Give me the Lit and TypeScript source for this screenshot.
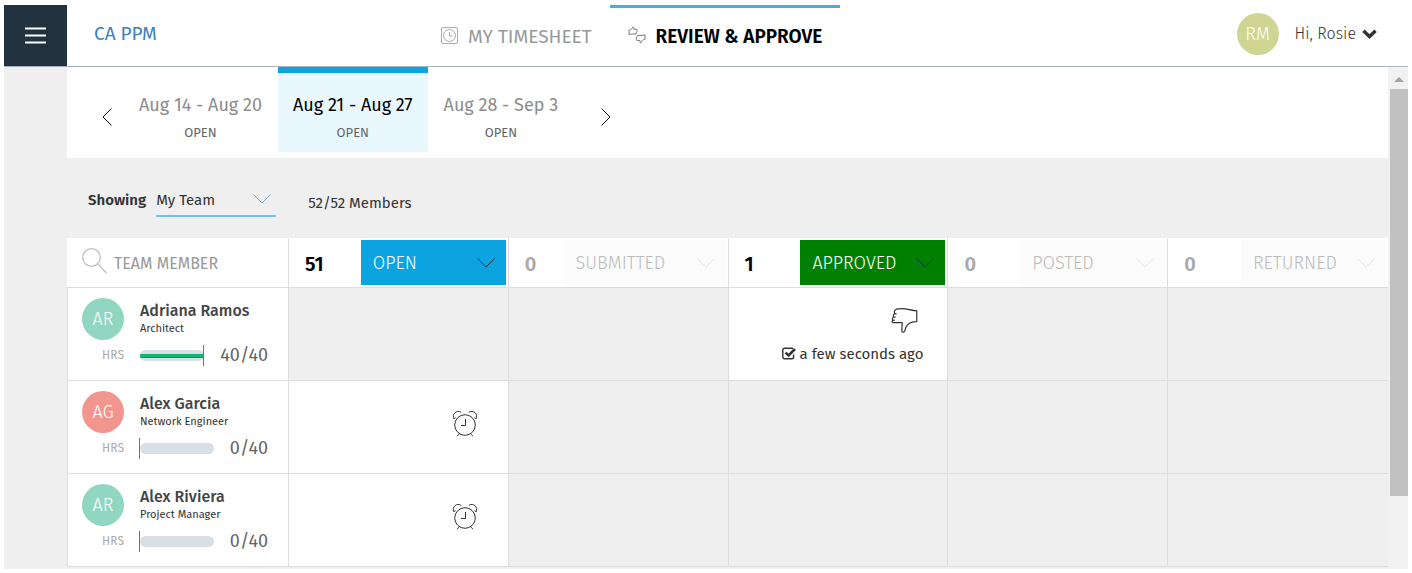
import { LitElement, html, svg, css, nothing } from "lit";
import { customElement, property } from "lit/decorators.js";
import { classMap } from "lit/directives/class-map.js";

interface Status { key: string; label: string; count: number; }
interface Member {
  name: string; initials: string; role: string; tone: string;
  hours: number; total: number; status: string; when?: string;
}

const WEEKS = [
  { label: "Aug 14 - Aug 20", status: "OPEN", active: false },
  { label: "Aug 21 - Aug 27", status: "OPEN", active: true },
  { label: "Aug 28 - Sep 3", status: "OPEN", active: false },
];

const STATUSES: Status[] = [
  { key: "open", label: "OPEN", count: 51 },
  { key: "submitted", label: "SUBMITTED", count: 0 },
  { key: "approved", label: "APPROVED", count: 1 },
  { key: "posted", label: "POSTED", count: 0 },
  { key: "returned", label: "RETURNED", count: 0 },
];

const MEMBERS: Member[] = [
  { name: "Adriana Ramos", initials: "AR", role: "Architect", tone: "mint", hours: 40, total: 40, status: "approved", when: "a few seconds ago" },
  { name: "Alex Garcia", initials: "AG", role: "Network Engineer", tone: "coral", hours: 0, total: 40, status: "open" },
  { name: "Alex Riviera", initials: "AR", role: "Project Manager", tone: "mint", hours: 0, total: 40, status: "open" },
];

const stroke = (w: number, h: number, body: unknown, width = 1) => html`
  <svg width=${w} height=${h} viewBox="0 0 ${w} ${h}" fill="none" stroke="currentColor"
    stroke-width=${width} aria-hidden="true">${body}</svg>`;

const chevronDown = () => stroke(18, 10, svg`<path d="M.5 .5 9 9 17.5 .5"/>`);

@customElement("hours-bar")
export class HoursBar extends LitElement {
  @property({ type: Number }) hours = 0;
  @property({ type: Number }) total = 40;

  static styles = css`
    :host { display: flex; align-items: center; position: relative; height: 21px; }
    .track { flex: 1; height: 11px; border-radius: 6px; background: #d8dfe7; overflow: hidden; display: flex; align-items: center; }
    .fill { height: 4px; background: #10b572; border-bottom: 1px solid #0a9a5f; box-sizing: border-box; }
    .tick { position: absolute; top: 0; bottom: 0; width: 1px; margin-left: -1px; background: #12a66a; }
  `;

  render() {
    const pct = Math.min(100, (this.hours / this.total) * 100);
    return html`
      <div class="track"><div class="fill" style="width:${pct}%"></div></div>
      <div class="tick" style="left:${pct}%"></div>`;
  }
}

@customElement("app-root")
export class AppRoot extends LitElement {
  static styles = css`
    :host {
      display: flex; flex-direction: column; box-sizing: border-box; height: 100vh;
      padding: 5px 4px 4px; background: #fff; color: #333; overflow: hidden;
      font: 400 15px/20px "Fira Sans", "Open Sans", sans-serif;
    }
    *, *::before { box-sizing: border-box; }
    button, input, select { font: inherit; color: inherit; border: 0; background: none; padding: 0; margin: 0; border-radius: 0; }
    svg { display: block; flex: none; }

    .top { flex: none; display: grid; grid-template-columns: 63px 356px auto 1fr; height: 62px; border-bottom: 1px solid #a5b3c3; }
    .menu { background: #21323e; color: #fff; display: grid; place-items: center; }
    .brand { align-self: center; padding: 0 27px; margin-bottom: 4px; font-size: 19px; line-height: 24px; color: #3d7fbf; text-decoration: none; }
    .tabs { display: flex; }
    .tab { display: flex; align-items: center; gap: 10px; padding: 0 18px; border-top: 3px solid transparent; font-size: 19px; line-height: 24px; color: #999; text-decoration: none; white-space: nowrap; }
    .tab.active { border-color: #4aacd9; color: #000; font-weight: 600; }
    .tab svg { color: #aaa; margin-bottom: 4px; }
    .tab.active svg { color: #777; }
    .user { justify-self: end; display: flex; align-items: center; padding-right: 31px; margin-bottom: 3px; }
    .user button { display: flex; align-items: center; gap: 6px; margin-left: 16px; font-size: 16px; font-weight: 300; }
    .avatar { display: grid; place-items: center; width: 42px; height: 42px; border-radius: 50%; color: #fff; font-size: 18px; line-height: 24px; font-weight: 300; }
    .olive { background: #cfd694; }
    .mint { background: #91d6c0; }
    .coral { background: #f2958f; }

    .body { flex: 1; min-height: 0; display: grid; grid-template-columns: 63px minmax(0, 1fr) 20px; background: #efefef; }
    main { grid-column: 2; overflow: hidden; }

    .weeks { display: flex; align-items: flex-start; gap: 1px; height: 91px; padding-left: 24px; background: #fff; }
    .weeks .arrow { width: 32px; display: grid; place-items: center; align-self: center; height: 40px; margin-top: 8px; color: #111; }
    .weeks .arrow.next { margin-left: 16px; }
    .week { height: 85px; padding: 12px 15px 0; border-top: 6px solid transparent; text-align: center; font-size: 18px; line-height: 24px; color: #8c8c8c; white-space: nowrap; }
    .week small { display: block; margin-top: 4px; font-size: 13px; line-height: 24px; color: #666; }
    .week.active { background: #e9f8fe; border-color: #0ba4e0; color: #000; }

    .filters { display: flex; align-items: center; height: 80px; padding: 4px 20px 0 21px; }
    .filters label { font-weight: 600; margin-right: 10px; }
    .picker { display: grid; grid-template-columns: 1fr auto; align-items: center; width: 120px; height: 34px; border-bottom: 2px solid #6ec1f0; }
    .picker select { grid-area: 1 / 1 / 2 / 3; appearance: none; width: 100%; height: 32px; padding-top: 2px; outline: 0; }
    .picker svg { grid-area: 1 / 2; margin: 0 5px 0 0; color: #7fa9d1; pointer-events: none; }
    .count { margin-left: 32px; padding-top: 6px; }

    table { width: 100%; border-collapse: separate; border-spacing: 0; table-layout: fixed; }
    .who { width: 222px; }
    th, td { padding: 0; border: solid #ddd; border-width: 0 1px 1px 0; }
    th { height: 50px; background: #fff; font-weight: 400; text-align: left; }
    th:last-child, td:last-child { border-right: 0; }
    .search { display: flex; align-items: center; gap: 7px; padding: 0 16px 0 15px; color: #bbb; }
    .search svg { margin-bottom: 4px; }
    .search input { width: 100%; height: 26px; padding-top: 2px; font-size: 16px; outline: 0; }
    .search input::placeholder { color: #999; opacity: 1; }
    .status { display: flex; align-items: center; justify-content: space-between; padding: 2px 2px 2px 16px; color: #000; }
    .status b { padding-top: 2px; font-size: 20px; line-height: 24px; font-weight: 600; }
    .status button { display: flex; align-items: center; justify-content: space-between; gap: 20px; min-width: 145px; height: 45px; padding: 0 11px 0 12px; font-size: 18px; font-weight: 300; color: #fff; background: #0ba4e0; }
    .status.submitted button { min-width: 162px; }
    .status.approved button { background: #008000; }
    .status svg { color: #0a2a33; }
    .status.empty { color: #aaa; }
    .status.empty button { background: #fbfbfb; color: #bbb; }
    .status.empty svg { color: #e6e6e6; }

    td { height: 93px; vertical-align: top; }
    .person { display: grid; grid-template-columns: 42px 1fr; align-content: start; column-gap: 16px; row-gap: 5px; padding: 10px 20px 0 14px; border-left: 1px solid #ddd; height: 92px; background: #fff; }
    .name { padding-top: 3px; font-size: 16px; line-height: 20px; font-weight: 500; color: #444; }
    .role { font-size: 11px; line-height: 16px; }
    .unit { font-size: 12px; line-height: 21px; color: #aaa; text-align: right; }
    .hours { display: flex; align-items: center; gap: 16px; font-size: 18px; line-height: 21px; color: #666; }
    .hours hours-bar { flex: 1; }
    .card { display: flex; flex-direction: column; align-items: flex-end; justify-content: center; gap: 11px; height: 92px; padding: 3px 24px 0; background: #fff; color: #333; }
    .card.open { padding: 0 25px 8px; }
    .card svg { margin-right: 5px; }
    .card .stamp { display: flex; align-items: center; gap: 4px; white-space: nowrap; }
    .card .stamp svg { margin: 0; }

    .scroll { display: flex; flex-direction: column; align-items: center; padding-left: 2px; background: #f1f1f1; color: #a3a3a3; }
    .up { width: 0; height: 0; margin: 10px 0 7px; border: solid transparent; border-width: 0 5px 5px; border-bottom-color: #a3a3a3; }
    .thumb { width: 100%; height: 81%; background: #c1c1c1; }
  `;

  private clockTab() {
    return stroke(17, 17, svg`<rect x=".5" y=".5" width="16" height="16" rx="1.5"/><circle cx="8.5" cy="8.5" r="6"/><path d="M8.5 5v4h3"/>`);
  }

  private thumbsTab() {
    return stroke(18, 18, svg`
      <path d="M1 4.2 2.6 3.5C4 3 4.6 2 4.8 .9 5.6 .7 6 1.5 5.8 3.3H8.6L9.2 4.2 8.8 5.2 9 6.2 8.4 6.8 8 8H3.6L1 8.4Z"/>
      <path d="M17 13.2 15.4 13.8C13.8 14.5 13.2 15.6 13 16.8 12 17 11.8 16 12 14.4H8.8L8.2 13.3 8.6 12.3 8.4 11.2 9.2 10.6 9.8 9.4H14.4L17 8.9Z"/>`);
  }

  private alarm() {
    return stroke(26, 27, svg`
      <circle cx="13" cy="15" r="10.3"/><path d="M13.5 9v6.5H9"/>
      <path d="M2 9C-.6 4.4 4.6-.8 9.2 2.4M24 9C26.6 4.4 21.4-.8 16.8 2.4M2 8.6 3.6 7.6M24 8.6 22.4 7.6M7.4 23.8 5 26.2M18.6 23.8 21 26.2"/>`);
  }

  private thumbDown() {
    return stroke(27, 25, svg`
      <path stroke-linejoin="round" d="M5 1.2C9 .6 14 .6 17 1.4 20 2.2 23 2.6 25.8 2.8V13.6C21 13.6 17 15 15 19L13.6 23.4C12.6 24.6 11 24.4 10.8 23L11.2 14.6H2.2C.8 14.4 .6 13 1.8 12.4L3.8 12.2M1.8 12.2C1 11 1.4 9.4 2.8 9.2L4.8 9M2.8 9C2 7.8 2.4 6.2 3.8 5.8L5.6 5.6M3.8 5.6C3 4 3.6 2.2 5 1.2"/>`, 1.2);
  }

  private checked() {
    return html`<svg width="14" height="13" viewBox="0 0 14 13" fill="none" stroke="currentColor" aria-hidden="true">
      <path d="M11 1.2H2.6A1.8 1.8 0 0 0 .8 3V10A1.8 1.8 0 0 0 2.6 11.8H9.8A1.8 1.8 0 0 0 11.6 10V7.6" stroke-width="1.4"/>
      <path d="M3.6 5.6 6.6 8.4 13 2" stroke-width="2.6"/></svg>`;
  }

  private cell(m: Member, s: Status) {
    if (m.status !== s.key) return html`<td></td>`;
    return html`<td><div class="card ${s.key}">
      ${s.key === "approved" ? this.thumbDown() : this.alarm()}
      ${m.when ? html`<div class="stamp">${this.checked()}<span>${m.when}</span></div>` : nothing}
    </div></td>`;
  }

  render() {
    return html`
      <header class="top">
        <button class="menu" aria-label="Menu">${stroke(21, 17, svg`<path d="M0 1.5H21M0 8.5H21M0 15.5H21"/>`, 2)}</button>
        <a class="brand" href="#">CA PPM</a>
        <nav class="tabs">
          <a class="tab" href="#timesheet">${this.clockTab()}MY TIMESHEET</a>
          <a class="tab active" href="#review" aria-current="page">${this.thumbsTab()}REVIEW &amp; APPROVE</a>
        </nav>
        <div class="user">
          <span class="avatar olive">RM</span>
          <button aria-haspopup="menu">Hi, Rosie ${stroke(15, 10, svg`<path d="M1.4 1.8 7.5 7.6 13.6 1.8"/>`, 3.4)}</button>
        </div>
      </header>
      <div class="body">
        <main>
          <section class="weeks" aria-label="Time periods">
            <button class="arrow" aria-label="Previous">${stroke(10, 18, svg`<path d="M9.5 .5 1 9 9.5 17.5"/>`)}</button>
            ${WEEKS.map(w => html`
              <button class=${classMap({ week: true, active: w.active })}>${w.label}<small>${w.status}</small></button>`)}
            <button class="arrow next" aria-label="Next">${stroke(10, 18, svg`<path d="M.5 .5 9 9 .5 17.5"/>`)}</button>
          </section>
          <section class="filters">
            <label for="team">Showing</label>
            <div class="picker"><select id="team"><option>My Team</option></select>${chevronDown()}</div>
            <span class="count">52/52 Members</span>
          </section>
          <table>
            <thead><tr>
              <th class="who"><label class="search">
                ${stroke(25, 26, svg`<circle cx="9.5" cy="9.5" r="8.8"/><path d="M16 16 24.5 25.2"/>`, 1.2)}
                <input type="text" placeholder="TEAM MEMBER" aria-label="Team member"></label></th>
              ${STATUSES.map(s => html`<th><div class=${classMap({ status: true, [s.key]: true, empty: s.count === 0 })}>
                <b>${s.count}</b><button aria-haspopup="menu">${s.label}${chevronDown()}</button></div></th>`)}
            </tr></thead>
            <tbody>
              ${MEMBERS.map(m => html`<tr>
                <td><div class="person">
                  <span class="avatar ${m.tone}">${m.initials}</span>
                  <div><div class="name">${m.name}</div><div class="role">${m.role}</div></div>
                  <span class="unit">HRS</span>
                  <div class="hours"><hours-bar .hours=${m.hours} .total=${m.total}></hours-bar>${m.hours}/${m.total}</div>
                </div></td>
                ${STATUSES.map(s => this.cell(m, s))}
              </tr>`)}
            </tbody>
          </table>
        </main>
        <div class="scroll" aria-hidden="true"><div class="up"></div><div class="thumb"></div></div>
      </div>`;
  }
}
